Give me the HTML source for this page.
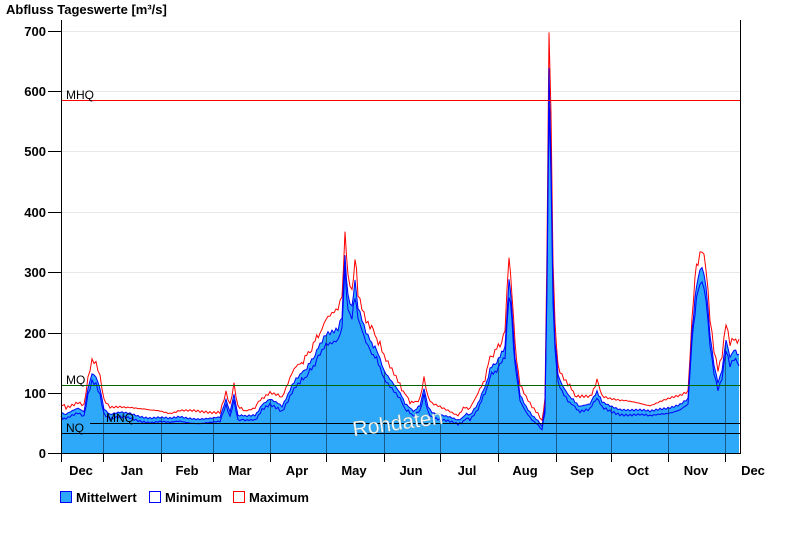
<!DOCTYPE html>
<html><head><meta charset="utf-8"><style>
body{margin:0;background:#fff;width:800px;height:550px;overflow:hidden}
svg text{font-family:"Liberation Sans",Arial,sans-serif}
</style></head><body>
<svg id="s" width="800" height="550" xmlns="http://www.w3.org/2000/svg">
<text x="6" y="14" font-size="13" font-weight="bold">Abfluss Tageswerte [m³/s]</text>
<g stroke="#e8e8e8" stroke-width="1">
<line x1="61" x2="740" y1="31.5" y2="31.5"/><line x1="61" x2="740" y1="91.5" y2="91.5"/><line x1="61" x2="740" y1="151.5" y2="151.5"/><line x1="61" x2="740" y1="212.5" y2="212.5"/><line x1="61" x2="740" y1="272.5" y2="272.5"/><line x1="61" x2="740" y1="333.5" y2="333.5"/><line x1="61" x2="740" y1="393.5" y2="393.5"/>
</g>
<g font-size="13" font-weight="bold" text-anchor="end">
<text x="46" y="36">700</text><text x="46" y="96">600</text><text x="46" y="156">500</text><text x="46" y="217">400</text><text x="46" y="277">300</text><text x="46" y="338">200</text><text x="46" y="398">100</text><text x="46" y="458">0</text>
</g>
<g stroke="#000"><line x1="48" x2="61" y1="31.5" y2="31.5"/><line x1="48" x2="61" y1="91.5" y2="91.5"/><line x1="48" x2="61" y1="151.5" y2="151.5"/><line x1="48" x2="61" y1="212.5" y2="212.5"/><line x1="48" x2="61" y1="272.5" y2="272.5"/><line x1="48" x2="61" y1="333.5" y2="333.5"/><line x1="48" x2="61" y1="393.5" y2="393.5"/><line x1="48" x2="61" y1="453.5" y2="453.5"/></g>
<defs><clipPath id="cp"><path id="cpp"/></clipPath></defs>
<path id="fill" fill="#2ea8f8"/>
<g clip-path="url(#cp)" stroke="#1a5a8a" stroke-width="1">
<line x1="103.5" x2="103.5" y1="0" y2="454"/><line x1="161.5" x2="161.5" y1="0" y2="454"/><line x1="213.5" x2="213.5" y1="0" y2="454"/><line x1="270.5" x2="270.5" y1="0" y2="454"/><line x1="326.5" x2="326.5" y1="0" y2="454"/><line x1="384.5" x2="384.5" y1="0" y2="454"/><line x1="440.5" x2="440.5" y1="0" y2="454"/><line x1="498.5" x2="498.5" y1="0" y2="454"/><line x1="556.5" x2="556.5" y1="0" y2="454"/><line x1="611.5" x2="611.5" y1="0" y2="454"/><line x1="668.5" x2="668.5" y1="0" y2="454"/><line x1="725.5" x2="725.5" y1="0" y2="454"/>
</g>
<path id="mx" fill="none" stroke="#f00" stroke-width="1"/>
<path id="mn" fill="none" stroke="#00f" stroke-width="1"/>
<path id="mn2" fill="none" stroke="#00f" stroke-width="1"/>
<line x1="61" x2="740" y1="100.5" y2="100.5" stroke="#f00"/>
<line x1="61" x2="740" y1="385.5" y2="385.5" stroke="#006400"/>
<line x1="90" x2="740" y1="423.5" y2="423.5" stroke="#000"/>
<line x1="61" x2="740" y1="433.5" y2="433.5" stroke="#000"/>
<g font-size="12"><text x="66" y="99">MHQ</text><text x="66" y="384">MQ</text><text x="106" y="422">MNQ</text><text x="66" y="432">NQ</text></g>
<text x="398" y="430" font-size="21" fill="#fff" stroke="#8aa" stroke-width="0.4" text-anchor="middle" transform="rotate(-8 398 425)">Rohdaten</text>
<line x1="61.5" x2="61.5" y1="20" y2="454" stroke="#000"/>
<line x1="740.5" x2="740.5" y1="20" y2="454" stroke="#000"/>
<line x1="61" x2="741" y1="453.5" y2="453.5" stroke="#000"/>
<g stroke="#000"><line x1="61.5" x2="61.5" y1="454" y2="462"/><line x1="103.5" x2="103.5" y1="454" y2="462"/><line x1="161.5" x2="161.5" y1="454" y2="462"/><line x1="213.5" x2="213.5" y1="454" y2="462"/><line x1="270.5" x2="270.5" y1="454" y2="462"/><line x1="326.5" x2="326.5" y1="454" y2="462"/><line x1="384.5" x2="384.5" y1="454" y2="462"/><line x1="440.5" x2="440.5" y1="454" y2="462"/><line x1="498.5" x2="498.5" y1="454" y2="462"/><line x1="556.5" x2="556.5" y1="454" y2="462"/><line x1="611.5" x2="611.5" y1="454" y2="462"/><line x1="668.5" x2="668.5" y1="454" y2="462"/><line x1="725.5" x2="725.5" y1="454" y2="462"/></g>
<g font-size="13" font-weight="bold" text-anchor="middle">
<text x="81" y="475">Dec</text><text x="132" y="475">Jan</text><text x="187" y="475">Feb</text><text x="240" y="475">Mar</text><text x="297" y="475">Apr</text><text x="354" y="475">May</text><text x="411" y="475">Jun</text><text x="467" y="475">Jul</text><text x="525" y="475">Aug</text><text x="582" y="475">Sep</text><text x="638" y="475">Oct</text><text x="696" y="475">Nov</text><text x="753" y="475">Dec</text>
</g>
<rect x="60.5" y="491.5" width="11" height="11" fill="#2ea8f8" stroke="#00f"/>
<text x="76" y="502" font-size="13" font-weight="bold">Mittelwert</text>
<rect x="149.5" y="491.5" width="11" height="11" fill="#fff" stroke="#00f"/>
<text x="165" y="502" font-size="13" font-weight="bold">Minimum</text>
<rect x="233.5" y="491.5" width="11" height="11" fill="#fff" stroke="#f00"/>
<text x="249" y="502" font-size="13" font-weight="bold">Maximum</text>
</svg>
<script>
var P=[[61,70],[66,65],[72,70],[78,75],[84,70],[88,110],[92,135],[96,130],[100,110],[104,75],[110,65],[120,68],[130,67],[140,63],[150,60],[160,60],[170,58],[180,62],[190,60],[200,58],[210,58],[220,60],[226,90],[230,70],[234,100],[238,65],[245,62],[255,65],[262,80],[270,90],[278,85],[282,80],[288,100],[292,115],[296,125],[300,130],[305,140],[310,150],[315,165],[320,180],[326,200],[332,205],[338,210],[342,230],[345,330],[348,260],[352,240],[355,290],[358,240],[362,220],[366,200],[370,190],[375,175],[380,160],[384,140],[390,125],[396,110],[400,100],[405,85],[410,75],[415,72],[420,80],[424,110],[428,80],[432,70],[440,65],[450,60],[458,55],[465,65],[470,65],[478,85],[485,110],[490,140],[495,150],[500,160],[505,180],[509,290],[512,240],[515,160],[520,100],[526,80],[532,65],[538,55],[542,45],[545,80],[547,300],[549,640],[551,500],[553,280],[555,190],[558,130],[562,115],[568,100],[575,85],[580,80],[590,82],[597,105],[602,85],[610,80],[620,75],[630,73],[640,72],[650,70],[660,75],[670,78],[680,82],[688,90],[692,200],[695,260],[698,290],[702,310],[706,280],[710,200],[714,150],[718,120],[722,140],[726,190],[730,160],[734,170],[739,165]];
var D=[];
for(var i=0;i<P.length-1;i++){var a=P[i],b=P[i+1];var n=Math.max(1,Math.round((b[0]-a[0])/2));for(var k=0;k<n;k++){var t=k/n;D.push([a[0]+(b[0]-a[0])*t,a[1]+(b[1]-a[1])*t]);}}
D.push(P[P.length-1]);
function Y(v){return (454-0.604*Math.min(v,698)).toFixed(1)}
function nz(x,s){return Math.sin(x*2.3+s)*Math.sin(x*0.71+s*2)}
function path(f,off,s,amp){var d="";D.forEach(function(p,i){var v=p[1]*f+off+nz(p[0],s)*amp*(0.5+p[1]/80);d+=(i?"L":"M")+p[0].toFixed(1)+","+Y(v)});return d}
var fd=path(1,0,0,2)+"L739,454L61,454Z";
document.getElementById("fill").setAttribute("d",fd);
document.getElementById("cpp").setAttribute("d",fd);
document.getElementById("mx").setAttribute("d",path(1.1,5,1.3,3));
document.getElementById("mn").setAttribute("d",path(1.0,0,0,2));
document.getElementById("mn2").setAttribute("d",path(0.93,-3,2.1,2.5));
</script>
</body></html>
